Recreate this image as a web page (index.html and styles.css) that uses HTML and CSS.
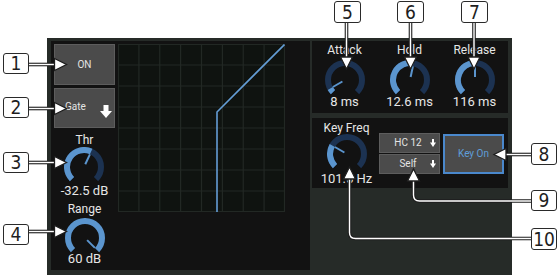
FILE: index.html
```html
<!DOCTYPE html>
<html>
<head>
<meta charset="utf-8">
<link rel="stylesheet" href="styles.css">
</head>
<body>
<div class="page">
  <div class="frame">
    <div class="left-panel">
      <div class="controls">
        <div class="btn btn-on">ON</div>
        <div class="btn btn-gate"><span>Gate</span><svg class="arrow-big" viewBox="0 0 12 13"><rect x="3.5" y="0" width="5" height="7"/><polygon points="0,6 12,6 6,13"/></svg></div>
        <div class="knob knob-thr">
          <div class="k-label">Thr</div>
          <svg class="dial" viewBox="0 0 40 35"><path class="arc-bg" d="M7.98 32.02A17 17 0 1 1 32.02 32.02"/><path class="arc-val" d="M7.98 32.02A17 17 0 0 1 27.18 4.59"/><line class="needle" x1="21.27" y1="17.28" x2="25.92" y2="7.31"/></svg>
          <div class="k-value">-32.5 dB</div>
        </div>
        <div class="knob knob-range">
          <div class="k-label">Range</div>
          <svg class="dial" viewBox="0 0 40 35"><path class="arc-val" d="M7.98 32.02A17 17 0 1 1 32.02 32.02"/><line class="needle" x1="22.12" y1="22.12" x2="29.9" y2="29.9"/></svg>
          <div class="k-value">60 dB</div>
        </div>
      </div>
      <div class="chart">
        <svg viewBox="0 0 167 168" width="167" height="168">
          <g class="grid">
            <line x1="0.5" y1="0" x2="0.5" y2="168"/>
            <line x1="20.9" y1="0" x2="20.9" y2="168"/>
            <line x1="41.75" y1="0" x2="41.75" y2="168"/>
            <line x1="62.6" y1="0" x2="62.6" y2="168"/>
            <line x1="83.5" y1="0" x2="83.5" y2="168"/>
            <line x1="104.4" y1="0" x2="104.4" y2="168"/>
            <line x1="125.25" y1="0" x2="125.25" y2="168"/>
            <line x1="146.1" y1="0" x2="146.1" y2="168"/>
            <line x1="166.5" y1="0" x2="166.5" y2="168"/>
            <line x1="0" y1="0.5" x2="167" y2="0.5"/>
            <line x1="0" y1="21" x2="167" y2="21"/>
            <line x1="0" y1="42" x2="167" y2="42"/>
            <line x1="0" y1="63" x2="167" y2="63"/>
            <line x1="0" y1="84" x2="167" y2="84"/>
            <line x1="0" y1="105" x2="167" y2="105"/>
            <line x1="0" y1="126" x2="167" y2="126"/>
            <line x1="0" y1="147" x2="167" y2="147"/>
            <line x1="0" y1="167.5" x2="167" y2="167.5"/>
          </g>
          <polyline class="curve" points="99,168 99,68 166.5,0.5"/>
        </svg>
      </div>
    </div>
    <div class="right-col">
      <div class="panel-dyn">
        <div class="knob knob-dyn">
          <div class="k-label">Attack</div>
          <svg class="dial" viewBox="0 0 40 35"><path class="arc-bg" d="M7.98 32.02A17 17 0 1 1 32.02 32.02"/><path class="arc-val" d="M7.98 32.02A17 17 0 0 1 5.28 28.5"/><line class="needle" x1="17.4" y1="21.5" x2="7.88" y2="27"/></svg>
          <div class="k-value">8 ms</div>
        </div>
        <div class="knob knob-dyn">
          <div class="k-label">Hold</div>
          <svg class="dial" viewBox="0 0 40 35"><path class="arc-bg" d="M7.98 32.02A17 17 0 1 1 32.02 32.02"/><path class="arc-val" d="M7.98 32.02A17 17 0 0 1 23.53 3.37"/><line class="needle" x1="20.62" y1="17.07" x2="22.91" y2="6.31"/></svg>
          <div class="k-value">12.6 ms</div>
        </div>
        <div class="knob knob-dyn">
          <div class="k-label">Release</div>
          <svg class="dial" viewBox="0 0 40 35"><path class="arc-bg" d="M7.98 32.02A17 17 0 1 1 32.02 32.02"/><path class="arc-val" d="M7.98 32.02A17 17 0 0 1 20 3"/><line class="needle" x1="20" y1="17" x2="20" y2="6"/></svg>
          <div class="k-value">116 ms</div>
        </div>
      </div>
      <div class="panel-key">
        <div class="knob knob-key">
          <div class="k-label">Key Freq</div>
          <svg class="dial" viewBox="0 0 40 35"><path class="arc-bg" d="M7.98 32.02A17 17 0 1 1 32.02 32.02"/><path class="arc-val" d="M7.98 32.02A17 17 0 0 1 5.28 11.5"/><line class="needle" x1="17.4" y1="18.5" x2="7.88" y2="13"/></svg>
          <div class="k-value">101.5 Hz</div>
        </div>
        <div class="sel-stack">
          <div class="btn btn-sel"><span class="sel-text">HC 12</span><svg class="arrow-small" viewBox="0 0 6 8"><rect x="2" y="0" width="2" height="4"/><polygon points="0,3.5 6,3.5 3,8"/></svg></div>
          <div class="btn btn-sel"><span class="sel-text">Self</span><svg class="arrow-small" viewBox="0 0 6 8"><rect x="2" y="0" width="2" height="4"/><polygon points="0,3.5 6,3.5 3,8"/></svg></div>
        </div>
        <div class="btn btn-keyon">Key On</div>
      </div>
    </div>
  </div>

  <svg class="callouts" viewBox="0 0 558 278" width="558" height="278">
    <g class="c-line-outer">
      <path d="M28 64.5H56"/>
      <path d="M28 108.5H56"/>
      <path d="M28 162.5H56"/>
      <path d="M28 231.5H56"/>
      <path d="M346.5 23V58"/>
      <path d="M410.5 23V58"/>
      <path d="M474 23V58"/>
      <path d="M531 154.5H505"/>
      <path d="M531 201H419.5Q413.5 201 413.5 195V180"/>
      <path d="M531 238.5H355.5Q349.5 238.5 349.5 232.5V178"/>
    </g>
    <g class="c-line-inner">
      <path d="M28 64.5H56"/>
      <path d="M28 108.5H56"/>
      <path d="M28 162.5H56"/>
      <path d="M28 231.5H56"/>
      <path d="M346.5 23V58"/>
      <path d="M410.5 23V58"/>
      <path d="M474 23V58"/>
      <path d="M531 154.5H505"/>
      <path d="M531 201H419.5Q413.5 201 413.5 195V180"/>
      <path d="M531 238.5H355.5Q349.5 238.5 349.5 232.5V178"/>
    </g>
    <g class="c-head">
      <polygon points="54.5,58.5 66.5,64.5 54.5,70.5"/>
      <polygon points="54.5,102.5 66.5,108.5 54.5,114.5"/>
      <polygon points="54.5,156.5 66.5,162.5 54.5,168.5"/>
      <polygon points="54.5,225.5 66.5,231.5 54.5,237.5"/>
      <polygon points="340.5,57 352.5,57 346.5,69"/>
      <polygon points="404.5,57 416.5,57 410.5,69"/>
      <polygon points="468,57 480,57 474,69"/>
      <polygon points="506,148.5 506,160.5 494,154.5"/>
      <polygon points="407.5,181 419.5,181 413.5,169"/>
      <polygon points="343.5,179 355.5,179 349.5,167"/>
    </g>
  </svg>

  <div class="tag tag-1">1</div>
  <div class="tag tag-2">2</div>
  <div class="tag tag-3">3</div>
  <div class="tag tag-4">4</div>
  <div class="tag tag-5">5</div>
  <div class="tag tag-6">6</div>
  <div class="tag tag-7">7</div>
  <div class="tag tag-8">8</div>
  <div class="tag tag-9">9</div>
  <div class="tag tag-10">10</div>
</div>
</body>
</html>
```

FILE: styles.css
```css
* {
  box-sizing: border-box;
  margin: 0;
  padding: 0;
}

html,
body {
  background: #ffffff;
}

body {
  width: 558px;
  height: 278px;
  overflow: hidden;
  font-family: Roboto, "Liberation Sans", sans-serif;
}

.page {
  position: relative;
  width: 558px;
  height: 278px;
  padding: 38px 0 0 47px;
}

.frame {
  display: flex;
  gap: 2px;
  width: 465px;
  height: 237px;
  padding: 3px 4px 5px 4px;
  background: #262b28;
}

.left-panel {
  display: flex;
  gap: 3px;
  width: 259px;
  padding: 3px;
  background: #121212;
}

.controls {
  display: flex;
  flex-direction: column;
  align-items: center;
  width: 61px;
  flex: none;
}

.btn {
  display: flex;
  align-items: center;
  background: #4b4b4b;
  border: 1px solid #5d5d5d;
  color: #e4e4e4;
  font-size: 10px;
  line-height: 12px;
}

.btn-on {
  width: 61px;
  height: 41px;
  justify-content: center;
}

.btn-gate {
  width: 61px;
  height: 40px;
  margin-top: 3px;
  justify-content: space-between;
  padding: 0 2px 0 10px;
}

.btn-gate span {
  margin-top: -2px;
}

.arrow-big {
  flex: none;
  display: block;
  width: 12px;
  height: 13px;
  margin-top: 7px;
  fill: #ffffff;
}

.knob {
  display: flex;
  flex-direction: column;
  align-items: center;
  color: #e6e6e6;
}

.k-label {
  font-size: 12px;
  line-height: 14px;
  white-space: nowrap;
}

.dial {
  display: block;
  flex: none;
  width: 40px;
  height: 35px;
}

.k-value {
  font-size: 13px;
  line-height: 15px;
  white-space: nowrap;
}

.arc-bg {
  fill: none;
  stroke: #1c3251;
  stroke-width: 6;
}

.arc-val {
  fill: none;
  stroke: #5b95ce;
  stroke-width: 6;
}

.needle {
  stroke: #5b95ce;
  stroke-width: 2;
}

.knob-thr {
  margin-top: 5px;
}

.knob-thr .k-value {
  margin-top: 1px;
}

.knob-range {
  margin-top: 4px;
}

.knob-range .dial {
  margin-top: 2px;
}

.knob-range .k-value {
  margin-top: -2px;
}

.chart {
  width: 167px;
  height: 168px;
  background: #0f1310;
  flex: none;
}

.chart svg {
  display: block;
}

.grid line {
  stroke: #222824;
  stroke-width: 1.2;
}

.curve {
  fill: none;
  stroke: #649dd5;
  stroke-width: 1.6;
}

.right-col {
  display: flex;
  flex-direction: column;
  gap: 5px;
  width: 196px;
}

.panel-dyn {
  display: grid;
  grid-template-columns: repeat(3, 65px);
  height: 72px;
  padding-top: 2px;
  background: #121212;
}

.knob-dyn .dial {
  margin-top: 3px;
}

.knob-dyn .k-value {
  margin-top: -1px;
}

.panel-key {
  display: flex;
  align-items: flex-start;
  height: 70px;
  padding: 3px 4px 0 5px;
  background: #121212;
}

.knob-key {
  width: 59px;
  margin-right: 3px;
}

.knob-key .dial {
  margin-top: -1px;
}

.knob-key .k-value {
  margin-top: 2px;
}

.sel-stack {
  display: flex;
  flex-direction: column;
  gap: 1px;
  width: 61px;
  margin-top: 12px;
  margin-right: 3px;
}

.btn-sel {
  height: 20px;
  justify-content: space-between;
  padding: 0 3px 0 0;
}

.sel-text {
  flex: 1;
  text-align: center;
  padding-left: 6px;
}

.arrow-small {
  flex: none;
  display: block;
  width: 6px;
  height: 8px;
  fill: #ffffff;
}

.btn-keyon {
  width: 61px;
  height: 40px;
  margin-top: 13px;
  justify-content: center;
  border: 2px solid #4a88cc;
  color: #5f9dd9;
}

.callouts {
  position: absolute;
  left: 0;
  top: 0;
  pointer-events: none;
}

.c-line-outer path {
  fill: none;
  stroke: #1e1e1e;
  stroke-width: 3.6;
}

.c-line-inner path {
  fill: none;
  stroke: #ffffff;
  stroke-width: 1.4;
}

.c-head polygon {
  fill: #ffffff;
  stroke: #1e1e1e;
  stroke-width: 1.3;
  stroke-linejoin: miter;
}

.tag {
  position: absolute;
  width: 26px;
  height: 21px;
  display: flex;
  align-items: center;
  justify-content: center;
  background: #ffffff;
  border: 1.5px solid #2a2a2a;
  border-radius: 3px;
  color: #1e1e1e;
  font-family: "Liberation Sans Narrow", "DejaVu Sans Condensed", sans-serif;
  font-stretch: condensed;
  font-size: 19px;
  line-height: 19px;
}

.tag-1 { left: 3px; top: 53px; }
.tag-2 { left: 3px; top: 97px; }
.tag-3 { left: 3px; top: 152px; }
.tag-4 { left: 3px; top: 224px; }
.tag-5 { left: 334px; top: 1px; width: 27px; height: 22px; }
.tag-6 { left: 397px; top: 1px; width: 27px; height: 22px; }
.tag-7 { left: 461px; top: 1px; width: 27px; height: 22px; }
.tag-8 { left: 531px; top: 143px; height: 22px; }
.tag-9 { left: 531px; top: 190px; }
.tag-10 { left: 531px; top: 228px; height: 22px; }
```
